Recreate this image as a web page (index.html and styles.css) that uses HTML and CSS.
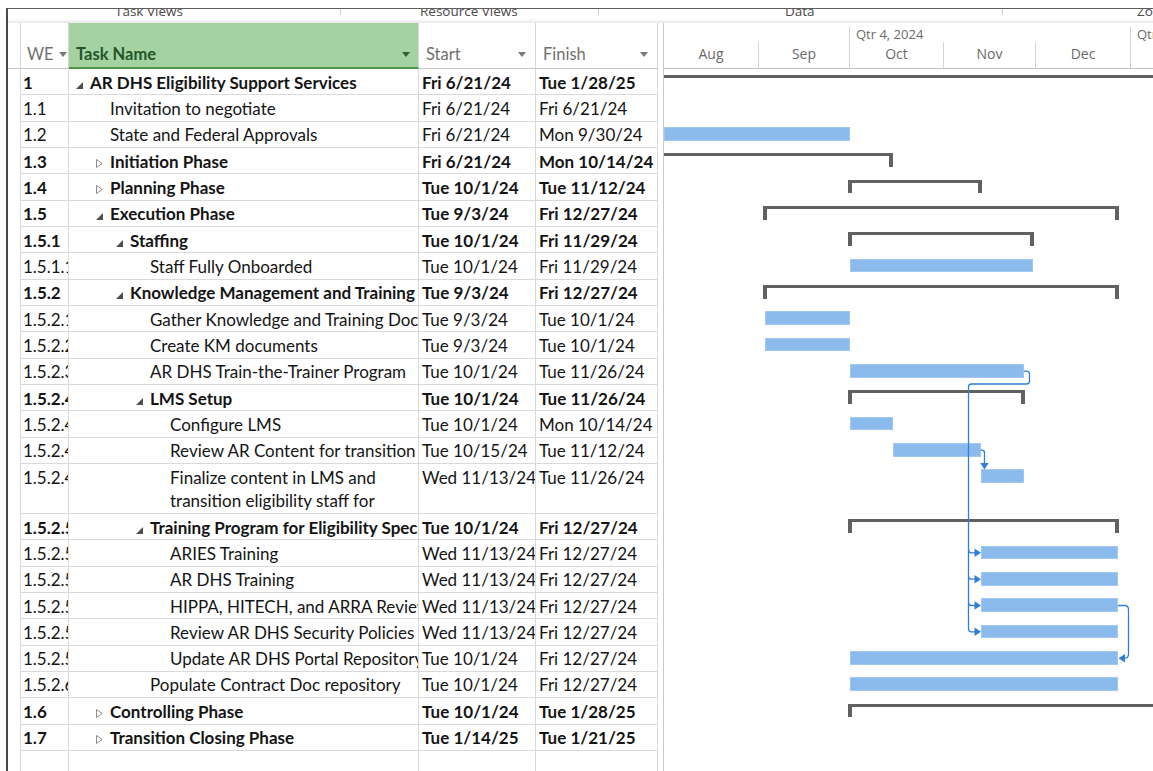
FILE: index.html
```html
<!DOCTYPE html>
<html lang="en">
<head>
<meta charset="utf-8">
<title>AR DHS Eligibility Support Services - Gantt Chart</title>
<link rel="stylesheet" href="styles.css">
</head>
<body>
<div class="app">
  <div class="strip">
    <div class="grp g1"><span>Task Views</span></div>
    <div class="grp g2"><span>Resource Views</span></div>
    <div class="grp g3"><span>Data</span></div>
    <div class="grp g4"><span>Zoom</span></div>
  </div>

  <div class="view">
    <!-- task sheet -->
    <div class="grid">
      <div class="ghead">
        <div class="hc sel"></div>
        <div class="hc wbs">WE<i class="dd near"></i></div>
        <div class="hc name">Task Name<i class="dd"></i></div>
        <div class="hc start">Start<i class="dd"></i></div>
        <div class="hc finish">Finish<i class="dd"></i></div>
      </div>

      <div class="row sum">
        <div class="c sel"></div><div class="c wbs">1</div>
        <div class="c name l0"><span class="tw"><svg width="7" height="7"><polygon points="0,7 7,7 7,0"/></svg></span>AR DHS Eligibility Support Services</div>
        <div class="c start">Fri 6/21/24</div><div class="c finish">Tue 1/28/25</div>
      </div>
      <div class="row">
        <div class="c sel"></div><div class="c wbs">1.1</div>
        <div class="c name l1">Invitation to negotiate</div>
        <div class="c start">Fri 6/21/24</div><div class="c finish">Fri 6/21/24</div>
      </div>
      <div class="row">
        <div class="c sel"></div><div class="c wbs">1.2</div>
        <div class="c name l1">State and Federal Approvals</div>
        <div class="c start">Fri 6/21/24</div><div class="c finish">Mon 9/30/24</div>
      </div>
      <div class="row sum">
        <div class="c sel"></div><div class="c wbs">1.3</div>
        <div class="c name l1"><span class="tw"><svg class="closed" width="7" height="9"><path d="M0.5,0.5 L6.2,4.5 L0.5,8.5 Z"/></svg></span>Initiation Phase</div>
        <div class="c start">Fri 6/21/24</div><div class="c finish">Mon 10/14/24</div>
      </div>
      <div class="row sum">
        <div class="c sel"></div><div class="c wbs">1.4</div>
        <div class="c name l1"><span class="tw"><svg class="closed" width="7" height="9"><path d="M0.5,0.5 L6.2,4.5 L0.5,8.5 Z"/></svg></span>Planning Phase</div>
        <div class="c start">Tue 10/1/24</div><div class="c finish">Tue 11/12/24</div>
      </div>
      <div class="row sum">
        <div class="c sel"></div><div class="c wbs">1.5</div>
        <div class="c name l1"><span class="tw"><svg width="7" height="7"><polygon points="0,7 7,7 7,0"/></svg></span>Execution Phase</div>
        <div class="c start">Tue 9/3/24</div><div class="c finish">Fri 12/27/24</div>
      </div>
      <div class="row sum">
        <div class="c sel"></div><div class="c wbs">1.5.1</div>
        <div class="c name l2"><span class="tw"><svg width="7" height="7"><polygon points="0,7 7,7 7,0"/></svg></span>Staffing</div>
        <div class="c start">Tue 10/1/24</div><div class="c finish">Fri 11/29/24</div>
      </div>
      <div class="row">
        <div class="c sel"></div><div class="c wbs">1.5.1.1</div>
        <div class="c name l3">Staff Fully Onboarded</div>
        <div class="c start">Tue 10/1/24</div><div class="c finish">Fri 11/29/24</div>
      </div>
      <div class="row sum">
        <div class="c sel"></div><div class="c wbs">1.5.2</div>
        <div class="c name l2"><span class="tw"><svg width="7" height="7"><polygon points="0,7 7,7 7,0"/></svg></span>Knowledge Management and Training</div>
        <div class="c start">Tue 9/3/24</div><div class="c finish">Fri 12/27/24</div>
      </div>
      <div class="row">
        <div class="c sel"></div><div class="c wbs">1.5.2.1</div>
        <div class="c name l3">Gather Knowledge and Training Documents</div>
        <div class="c start">Tue 9/3/24</div><div class="c finish">Tue 10/1/24</div>
      </div>
      <div class="row">
        <div class="c sel"></div><div class="c wbs">1.5.2.2</div>
        <div class="c name l3">Create KM documents</div>
        <div class="c start">Tue 9/3/24</div><div class="c finish">Tue 10/1/24</div>
      </div>
      <div class="row">
        <div class="c sel"></div><div class="c wbs">1.5.2.3</div>
        <div class="c name l3">AR DHS Train-the-Trainer Program</div>
        <div class="c start">Tue 10/1/24</div><div class="c finish">Tue 11/26/24</div>
      </div>
      <div class="row sum">
        <div class="c sel"></div><div class="c wbs">1.5.2.4</div>
        <div class="c name l3"><span class="tw"><svg width="7" height="7"><polygon points="0,7 7,7 7,0"/></svg></span>LMS Setup</div>
        <div class="c start">Tue 10/1/24</div><div class="c finish">Tue 11/26/24</div>
      </div>
      <div class="row">
        <div class="c sel"></div><div class="c wbs">1.5.2.4.1</div>
        <div class="c name l4">Configure LMS</div>
        <div class="c start">Tue 10/1/24</div><div class="c finish">Mon 10/14/24</div>
      </div>
      <div class="row">
        <div class="c sel"></div><div class="c wbs">1.5.2.4.2</div>
        <div class="c name l4">Review AR Content for transition</div>
        <div class="c start">Tue 10/15/24</div><div class="c finish">Tue 11/12/24</div>
      </div>
      <div class="row tall">
        <div class="c sel"></div><div class="c wbs">1.5.2.4.3</div>
        <div class="c name l4 wrap">Finalize content in LMS and<br>transition eligibility staff for</div>
        <div class="c start">Wed 11/13/24</div><div class="c finish">Tue 11/26/24</div>
      </div>
      <div class="row sum">
        <div class="c sel"></div><div class="c wbs">1.5.2.5</div>
        <div class="c name l3"><span class="tw"><svg width="7" height="7"><polygon points="0,7 7,7 7,0"/></svg></span>Training Program for Eligibility Specialists</div>
        <div class="c start">Tue 10/1/24</div><div class="c finish">Fri 12/27/24</div>
      </div>
      <div class="row">
        <div class="c sel"></div><div class="c wbs">1.5.2.5.1</div>
        <div class="c name l4">ARIES Training</div>
        <div class="c start">Wed 11/13/24</div><div class="c finish">Fri 12/27/24</div>
      </div>
      <div class="row">
        <div class="c sel"></div><div class="c wbs">1.5.2.5.2</div>
        <div class="c name l4">AR DHS Training</div>
        <div class="c start">Wed 11/13/24</div><div class="c finish">Fri 12/27/24</div>
      </div>
      <div class="row">
        <div class="c sel"></div><div class="c wbs">1.5.2.5.3</div>
        <div class="c name l4">HIPPA, HITECH, and ARRA Review</div>
        <div class="c start">Wed 11/13/24</div><div class="c finish">Fri 12/27/24</div>
      </div>
      <div class="row">
        <div class="c sel"></div><div class="c wbs">1.5.2.5.4</div>
        <div class="c name l4">Review AR DHS Security Policies</div>
        <div class="c start">Wed 11/13/24</div><div class="c finish">Fri 12/27/24</div>
      </div>
      <div class="row">
        <div class="c sel"></div><div class="c wbs">1.5.2.5.5</div>
        <div class="c name l4">Update AR DHS Portal Repository</div>
        <div class="c start">Tue 10/1/24</div><div class="c finish">Fri 12/27/24</div>
      </div>
      <div class="row">
        <div class="c sel"></div><div class="c wbs">1.5.2.6</div>
        <div class="c name l3">Populate Contract Doc repository</div>
        <div class="c start">Tue 10/1/24</div><div class="c finish">Fri 12/27/24</div>
      </div>
      <div class="row sum">
        <div class="c sel"></div><div class="c wbs">1.6</div>
        <div class="c name l1"><span class="tw"><svg class="closed" width="7" height="9"><path d="M0.5,0.5 L6.2,4.5 L0.5,8.5 Z"/></svg></span>Controlling Phase</div>
        <div class="c start">Tue 10/1/24</div><div class="c finish">Tue 1/28/25</div>
      </div>
      <div class="row sum">
        <div class="c sel"></div><div class="c wbs">1.7</div>
        <div class="c name l1"><span class="tw"><svg class="closed" width="7" height="9"><path d="M0.5,0.5 L6.2,4.5 L0.5,8.5 Z"/></svg></span>Transition Closing Phase</div>
        <div class="c start">Tue 1/14/25</div><div class="c finish">Tue 1/21/25</div>
      </div>
      <div class="row">
        <div class="c sel"></div><div class="c wbs"></div>
        <div class="c name"></div>
        <div class="c start"></div><div class="c finish"></div>
      </div>
    </div>

    <div class="split"></div>

    <!-- gantt chart -->
    <div class="chart">
      <div class="chead">
        <div class="tier1">
          <div class="qtr q3"></div>
          <div class="qtr q4">Qtr 4, 2024</div>
          <div class="qtr q1">Qtr 1, 2025</div>
        </div>
        <div class="tier2">
          <div class="mon m-aug">Aug</div>
          <div class="mon m-sep">Sep</div>
          <div class="mon m-oct">Oct</div>
          <div class="mon m-nov">Nov</div>
          <div class="mon m-dec">Dec</div>
          <div class="mon m-jan">Jan</div>
        </div>
      </div>

      <div class="cbody">
        <div class="crow"><div class="sumbar nl nr" style="left:0;width:489px"></div></div>
        <div class="crow"></div>
        <div class="crow"><div class="bar" style="left:0;width:186px"></div></div>
        <div class="crow"><div class="sumbar nl" style="left:0;width:229px"></div></div>
        <div class="crow"><div class="sumbar" style="left:184px;width:134px"></div></div>
        <div class="crow"><div class="sumbar" style="left:99px;width:356px"></div></div>
        <div class="crow"><div class="sumbar" style="left:184px;width:186px"></div></div>
        <div class="crow"><div class="bar" style="left:186px;width:183px"></div></div>
        <div class="crow"><div class="sumbar" style="left:99px;width:356px"></div></div>
        <div class="crow"><div class="bar" style="left:101px;width:85px"></div></div>
        <div class="crow"><div class="bar" style="left:101px;width:85px"></div></div>
        <div class="crow"><div class="bar" style="left:186px;width:174px"></div></div>
        <div class="crow"><div class="sumbar" style="left:184px;width:177px"></div></div>
        <div class="crow"><div class="bar" style="left:186px;width:43px"></div></div>
        <div class="crow"><div class="bar" style="left:229px;width:88px"></div></div>
        <div class="crow tall"><div class="bar" style="left:317px;width:43px"></div></div>
        <div class="crow"><div class="sumbar" style="left:184px;width:271px"></div></div>
        <div class="crow"><div class="bar" style="left:317px;width:137px"></div></div>
        <div class="crow"><div class="bar" style="left:317px;width:137px"></div></div>
        <div class="crow"><div class="bar" style="left:317px;width:137px"></div></div>
        <div class="crow"><div class="bar" style="left:317px;width:137px"></div></div>
        <div class="crow"><div class="bar" style="left:186px;width:268px"></div></div>
        <div class="crow"><div class="bar" style="left:186px;width:268px"></div></div>
        <div class="crow"><div class="sumbar nr" style="left:184px;width:310px"></div></div>
        <div class="crow"></div>
        <div class="crow"></div>
      </div>

      <!-- dependency links -->
      <svg class="links" width="489" height="700" viewBox="0 0 489 700">
        <g class="ln">
          <path d="M360,302.2 H362.5 Q365.5,302.2 365.5,305.2 V312 Q365.5,315 362.5,315 H307.5 Q304.5,315 304.5,318 V559.8 Q304.5,562.8 307.5,562.8 H311"/>
          <path d="M304.5,480.8 Q304.5,483.8 307.5,483.8 H311"/>
          <path d="M304.5,507.2 Q304.5,510.2 307.5,510.2 H311"/>
          <path d="M304.5,533.5 Q304.5,536.5 307.5,536.5 H311"/>
          <path d="M316.5,381.2 H318 Q320.5,381.2 320.5,383.7 V395"/>
          <path d="M454,536.5 H460.5 Q464.5,536.5 464.5,540.5 V585.2 Q464.5,589.2 460.5,589.2"/>
        </g>
        <g class="ah">
          <polygon points="310.5,479.6 317,483.8 310.5,488"/>
          <polygon points="310.5,506 317,510.2 310.5,514.4"/>
          <polygon points="310.5,532.3 317,536.5 310.5,540.7"/>
          <polygon points="310.5,558.6 317,562.8 310.5,567"/>
          <polygon points="316.3,394 324.7,394 320.5,400.5"/>
          <polygon points="461,585 461,593.4 454.5,589.2"/>
        </g>
      </svg>
    </div>
  </div>
</div>
</body>
</html>
```

FILE: styles.css
```css
html, body {
  margin: 0;
  padding: 0;
  background: #ffffff;
  overflow: hidden;
}

body {
  font-family: Lato, "Liberation Sans", sans-serif;
  color: #141414;
}

.app {
  margin: 8px 0 0 6px;
  height: 763px;
  border-top: 1px solid #5e5e5e;
  border-left: 2px solid #4a4a4a;
  display: flex;
  flex-direction: column;
}

/* ribbon group captions, mostly scrolled out of sight */
.strip {
  height: 14px;
  flex: none;
  display: flex;
  overflow: hidden;
  background: linear-gradient(to bottom, #ffffff 10px, #e7e7e7 14px);
  font-family: "Open Sans", sans-serif;
  font-size: 13.5px;
  color: #4a4a4a;
}

.grp {
  position: relative;
  flex: none;
  box-sizing: border-box;
  white-space: nowrap;
  overflow: hidden;
}

.grp span {
  display: block;
  line-height: 14px;
  margin-top: -5.5px;
}

.grp::after {
  content: "";
  position: absolute;
  right: 0;
  top: 0;
  height: 6px;
  border-right: 1px solid #cfcfcf;
}

.g1 { width: 333px; padding-left: 107px; }
.g2 { width: 258px; padding-left: 79px; }
.g3 { width: 404px; padding-left: 186px; }
.g4 { flex: 1 1 0; min-width: 0; padding-left: 134px; }
.g4::after { display: none; }

.view {
  flex: 1;
  min-height: 0;
  display: flex;
  overflow: hidden;
}

/* ---------- task sheet ---------- */
.grid {
  flex: none;
  width: 650px;
  font-size: 17px;
}

.ghead {
  display: flex;
  height: 46px;
}

.hc {
  box-sizing: border-box;
  height: 46px;
  border-right: 1px solid #d6d6d6;
  border-bottom: 1px solid #c4c4c4;
  display: flex;
  align-items: flex-end;
  padding: 0 0 2px 7px;
  line-height: 23px;
  color: #707070;
  font-size: 16.5px;
}

.hc.sel { padding: 0; }
.hc.wbs { padding-left: 6px; }

.hc.name {
  background: #a4d3a1;
  border-bottom: 2px solid #4b9848;
  color: #22562a;
  font-weight: bold;
  padding-bottom: 1px;
}

.dd {
  flex: none;
  margin: 0 9px 9px auto;
  border-top: 5px solid #7a7a7a;
  border-left: 4px solid transparent;
  border-right: 4px solid transparent;
}

.dd.near { margin-left: 5px; }
.hc.name .dd { border-top-color: #2f5f2f; margin-right: 8px; }

.sel { width: 13px; flex: none; }
.wbs { width: 48px; flex: none; }
.name { width: 350px; flex: none; }
.start { width: 117px; flex: none; }
.finish { width: 122px; flex: none; }

.row {
  display: flex;
  height: 26.33px;
}

.row.tall { height: 50px; }

.c {
  box-sizing: border-box;
  border-right: 1px solid #d9d9d9;
  border-bottom: 1px solid #d9d9d9;
  overflow: hidden;
  white-space: nowrap;
  line-height: 23px;
  padding-top: 1.6px;
}

.c.sel { border-bottom: 0; }
.c.wbs { padding-left: 2px; }
.c.start { padding-left: 3px; }
.c.finish { padding-left: 3px; }

.row.sum .c { font-weight: bold; }

.l0 { padding-left: 21px; }
.l1 { padding-left: 41px; }
.l2 { padding-left: 61px; }
.l3 { padding-left: 81px; }
.l4 { padding-left: 101px; }

.tw {
  display: inline-block;
  width: 14px;
  margin-left: -14px;
}

.tw svg {
  display: inline-block;
  vertical-align: 0;
  fill: #4e4e4e;
}

.tw svg.closed {
  vertical-align: 0;
  fill: none;
  stroke: #8c8c8c;
  stroke-width: 1;
}

.split {
  flex: none;
  width: 5px;
}

/* ---------- gantt chart ---------- */
.chart {
  flex: 1;
  position: relative;
  border-left: 1px solid #c9c9c9;
  overflow: hidden;
}

.chead {
  box-sizing: border-box;
  height: 46px;
  border-bottom: 1px solid #c2c2c2;
  font-family: "Open Sans", sans-serif;
  color: #6a6a6a;
}

.tier1 {
  height: 19px;
  display: flex;
  font-size: 13px;
}

.qtr {
  flex: none;
  box-sizing: border-box;
  margin-top: 4px;
  line-height: 14px;
  padding-left: 6px;
  white-space: nowrap;
}

.q3 { width: 185px; }
.q4 { width: 281px; border-left: 1px solid #d3d3d3; }
.q1 { width: 281px; border-left: 1px solid #d3d3d3; }

.tier2 {
  height: 26px;
  display: flex;
  font-size: 14px;
}

.mon {
  flex: none;
  box-sizing: border-box;
  line-height: 24px;
  text-align: center;
  border-left: 1px solid #d3d3d3;
}

.m-aug { width: 94px; border-left: 0; }
.m-sep { width: 91px; }
.m-oct { width: 94px; }
.m-nov { width: 92px; }
.m-dec { width: 95px; }
.m-jan { width: 95px; }

.crow {
  position: relative;
  height: 26.33px;
}

.crow.tall { height: 50px; }

.bar {
  position: absolute;
  top: 5.5px;
  height: 13.5px;
  background: #8bbbec;
  box-shadow: inset 0 0 0 1px #a2c8f0;
}

.sumbar {
  position: absolute;
  top: 5.5px;
  height: 13.5px;
  box-sizing: border-box;
  border-top: 3px solid #616161;
  border-left: 4px solid #616161;
  border-right: 4px solid #616161;
}

.sumbar.nl { border-left: 0; }
.sumbar.nr { border-right: 0; }

.links {
  position: absolute;
  left: 0;
  top: 46px;
  pointer-events: none;
  overflow: visible;
}

.links .ln path {
  fill: none;
  stroke: #2f7fd8;
  stroke-width: 1.3;
}

.links .ah polygon {
  fill: #2f7fd8;
}
```
